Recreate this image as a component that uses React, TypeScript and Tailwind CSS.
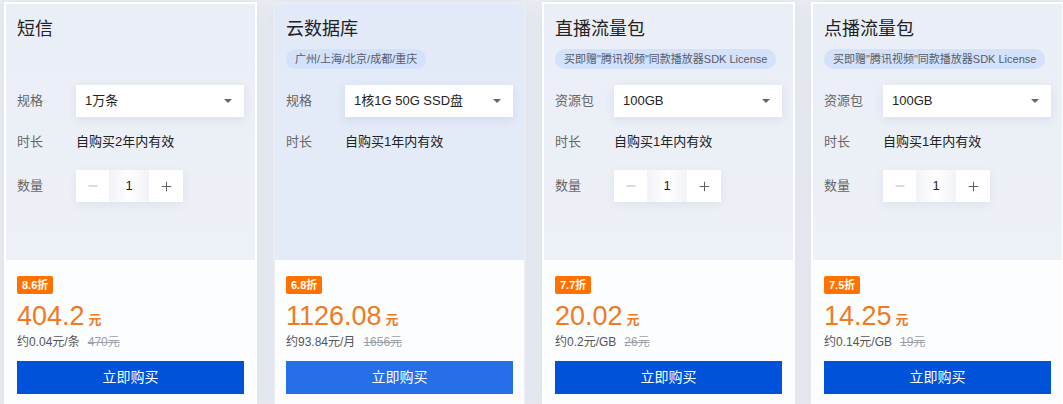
import { Minus, Plus } from 'lucide-react';

interface Product {
  title: string;
  tag?: string;
  specLabel: string;
  spec: string;
  duration: string;
  stepper: boolean;
  discount: string;
  price: string;
  unit: string;
  original: string;
  active?: boolean;
}

const products: Product[] = [
  {
    title: '短信',
    specLabel: '规格',
    spec: '1万条',
    duration: '自购买2年内有效',
    stepper: true,
    discount: '8.6折',
    price: '404.2',
    unit: '约0.04元/条',
    original: '470元',
  },
  {
    title: '云数据库',
    tag: '广州/上海/北京/成都/重庆',
    specLabel: '规格',
    spec: '1核1G 50G SSD盘',
    duration: '自购买1年内有效',
    stepper: false,
    discount: '6.8折',
    price: '1126.08',
    unit: '约93.84元/月',
    original: '1656元',
    active: true,
  },
  {
    title: '直播流量包',
    tag: '买即赠"腾讯视频"同款播放器SDK License',
    specLabel: '资源包',
    spec: '100GB',
    duration: '自购买1年内有效',
    stepper: true,
    discount: '7.7折',
    price: '20.02',
    unit: '约0.2元/GB',
    original: '26元',
  },
  {
    title: '点播流量包',
    tag: '买即赠"腾讯视频"同款播放器SDK License',
    specLabel: '资源包',
    spec: '100GB',
    duration: '自购买1年内有效',
    stepper: true,
    discount: '7.5折',
    price: '14.25',
    unit: '约0.14元/GB',
    original: '19元',
  },
];

function ProductCard({ p }: { p: Product }) {
  return (
    <div
      className={`w-[253px] shrink-0 flex flex-col shadow-[0_4px_16px_rgba(60,80,120,0.08)] ${
        p.active ? 'border-2 border-transparent' : 'border-2 border-white'
      }`}
    >
      <div
        className={`h-[256px] px-[11px] pt-[12px] ${
          p.active
            ? 'bg-gradient-to-b from-[#e2eaf9] to-[#e4ebf8]'
            : 'bg-gradient-to-b from-[#eaeef6] to-[#edf0f7]'
        }`}
      >
        <h2 className="text-[18px] leading-[26px] text-[#222]">{p.title}</h2>
        <div className="h-[20px] mt-[7px] flex">
          {p.tag && (
            <span className="h-[20px] leading-[20px] px-[9px] rounded-full bg-[#d3e1fb] text-[11px] text-[#555b66]">
              {p.tag}
            </span>
          )}
        </div>
        <div className="flex items-center mt-[16px]">
          <span className="w-[59px] text-[13px] text-[#666]">{p.specLabel}</span>
          <div className="w-[168px] h-[32px] bg-white flex items-center justify-between pl-[9px] pr-[12px] shadow-[0_3px_10px_rgba(50,80,140,0.1)]">
            <span className="text-[13px] text-[#222]">{p.spec}</span>
            <span className="w-0 h-0 border-l-[4px] border-r-[4px] border-t-[4px] border-l-transparent border-r-transparent border-t-[#666]" />
          </div>
        </div>
        <div className="flex items-center mt-[15px] h-[20px]">
          <span className="w-[59px] text-[13px] text-[#666]">时长</span>
          <span className="text-[13px] text-[#222]">{p.duration}</span>
        </div>
        {p.stepper && (
          <div className="flex items-center mt-[18px]">
            <span className="w-[59px] text-[13px] text-[#666]">数量</span>
            <div className="flex h-[32px] shadow-[0_3px_10px_rgba(50,80,140,0.08)]">
              <div className="w-[33px] bg-white flex items-center justify-center">
                <Minus className="w-[14px] h-[14px] text-[#aaa]" strokeWidth={1.5} />
              </div>
              <div className="w-[40px] bg-gradient-to-r from-[#f1f3f7] via-white to-[#f1f3f7] flex items-center justify-center text-[13px] text-[#222]">
                1
              </div>
              <div className="w-[34px] bg-white flex items-center justify-center">
                <Plus className="w-[15px] h-[15px] text-[#555]" strokeWidth={1.5} />
              </div>
            </div>
          </div>
        )}
      </div>
      <div className="bg-[#fcfdfe] px-[11px] pt-[16px] pb-[12px] flex-1">
        <div className="flex">
          <span className="h-[18px] leading-[18px] px-[5px] rounded-[2px] bg-[#ff7200] text-white text-[11px] font-semibold">
            {p.discount}
          </span>
        </div>
        <div className="mt-[6px] flex items-end text-[#f07a22] h-[32px]">
          <span className="text-[27px] leading-[32px] font-['Liberation_Sans','Noto_Sans_CJK_SC',sans-serif]">{p.price}</span>
          <span className="text-[13px] font-bold ml-[4px] mb-[3px]">元</span>
        </div>
        <div className="mt-[2px] text-[12px] leading-[16px] text-[#555]">
          {p.unit}
          <span className="ml-[8px] line-through text-[#9aa0aa]">{p.original}</span>
        </div>
        <button
          className={`mt-[11px] w-full h-[33px] text-white text-[14px] ${
            p.active ? 'bg-[#266fe8]' : 'bg-[#0052d9]'
          }`}
        >
          立即购买
        </button>
      </div>
    </div>
  );
}

export default function App() {
  return (
    <div className="h-[404px] w-[1063px] overflow-hidden bg-[#e9ecf2] font-['Liberation_Sans','Noto_Sans_CJK_SC',sans-serif]">
      <div className="flex gap-[16px] pl-[4px] pt-[2px]">
        {products.map(p => (
          <ProductCard key={p.title} p={p} />
        ))}
      </div>
    </div>
  );
}
